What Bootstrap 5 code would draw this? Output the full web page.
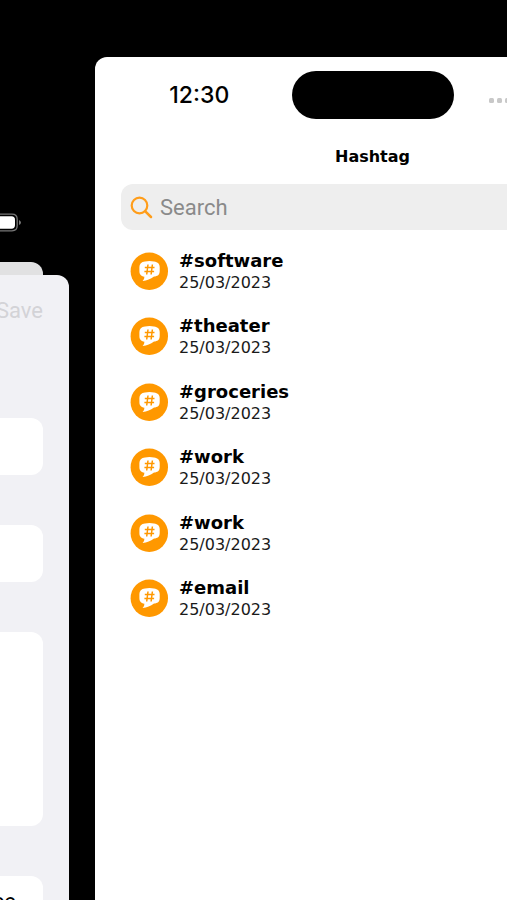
<!DOCTYPE html>
<html lang="en">
<head>
<meta charset="utf-8">
<meta name="viewport" content="width=device-width, initial-scale=1">
<title>Hashtag</title>
<link href="https://cdn.jsdelivr.net/npm/bootstrap@5.3.0/dist/css/bootstrap.min.css" rel="stylesheet">
<style>
body { background: #000; color: #000; font-family: "DejaVu Sans", Verdana, sans-serif; }
.stage { height: 100vh; gap: 26px; }
.phone-left { flex: 0 0 69px; min-width: 0; padding-top: 213px; }
.battery { display: block; flex: none; margin-bottom: 30px; }
.sheet-back { background: #e1e1e2; flex: none; height: 13px; margin-right: 26px; border-radius: 0 12px 0 0; }
.sheet { background: #f1f1f5; border-radius: 0 12px 0 0; padding-right: 26px; }
.save { color: #d3d3d7; font: 22px/28px Roboto, sans-serif; padding-top: 22px; }
.field { background: #fff; border-radius: 0 12px 12px 0; flex: none; }
.field-sm { height: 57px; }
.field-lg { height: 194px; }
.fields { gap: 50px; padding-top: 93px; }
.field-text { font: 22px/28px Roboto, sans-serif; padding: 12px 27px 0 0; height: 57px; }
.phone-right { flex: 1 0 555px; margin-top: 57px; background: #fff; border-radius: 12px 12px 0 0; padding: 14px 26px 0; }
.status { display: grid; grid-template-columns: 1fr 162px 1fr; align-items: center; }
.clock { font: 500 23px/28px Inter, sans-serif; padding-right: 14px; }
.island { height: 48px; background: #000; border-radius: 24px; }
.signal { padding-left: 35px; padding-top: 10px; }
.title { font-size: 16px; line-height: 24px; margin: 26px 0 15px; }
.search { background: #eee; border-radius: 12px; height: 46px; padding: 2px 9px 0; gap: 6px; }
.search input { font: 22px/28px Roboto, sans-serif; color: #000; outline: 0; }
.search input::placeholder { color: #8a8a8a; opacity: 1; }
.tags { display: grid; grid-template-rows: repeat(6, 1fr); height: 393px; margin-top: 8px; padding-left: 9px; }
.tag { gap: 11px; }
.tag-name { font-size: 18px; line-height: 24px; }
.tag-date { font-size: 16px; line-height: 20px; color: #1a1a1a; }
</style>
<script src="https://cdn.jsdelivr.net/npm/bootstrap@5.3.0/dist/js/bootstrap.bundle.min.js"></script>
</head>
<body>
<svg class="d-none" aria-hidden="true">
  <symbol id="chat-hash" viewBox="0 0 38 38">
    <circle cx="19.300" cy="19.200" r="18.700" fill="#ff9800"/>
    <path d="M15 9.400 Q19.500 8.700 24 9.400 C28 9.900 29.700 12 29.700 15 V19 C29.700 23 27.500 24.200 24 24.600 Q19 28.500 12.600 28.900 Q14.600 27 14.400 24.700 C10.700 24.200 9.400 22.200 9.400 19 V15 C9.400 11.700 11.300 9.800 15 9.400Z" fill="#fff"/>
    <path d="M18 12.500 L16.700 22.500 M22.400 12.500 L21.100 22.500 M14.800 15.400 H24.500 M14.400 19.600 H24.100" fill="none" stroke="#ff9800" stroke-width="1.500"/>
  </symbol>
</svg>
<div class="stage d-flex overflow-hidden">
  <section class="phone-left d-flex flex-column" aria-label="Editor">
    <svg class="battery" width="22" height="19" viewBox="0 0 22 19" aria-label="Battery">
      <path d="M-2 1.200 H12 Q17.200 1.200 17.200 6.500 V12.500 Q17.200 17.800 12 17.800 H-2" fill="none" stroke="#777" stroke-width="1.300"/>
      <path d="M0 3.300 H11.500 Q15 3.300 15 7 V12 Q15 15.700 11.500 15.700 H0Z" fill="#fff"/>
      <path d="M19 7 Q21 8 21 9.500 Q21 11 19 12Z" fill="#777"/>
    </svg>
    <div class="sheet-back"></div>
    <div class="sheet flex-grow-1 d-flex flex-column overflow-hidden">
      <div class="save d-flex justify-content-end"><span>Save</span></div>
      <div class="fields d-flex flex-column">
        <div class="field field-sm"></div>
        <div class="field field-sm"></div>
        <div class="field field-lg"></div>
        <div class="field field-text d-flex justify-content-end"><span>ee</span></div>
      </div>
    </div>
  </section>
  <main class="phone-right">
    <div class="status">
      <div class="clock text-center">12:30</div>
      <div class="island"></div>
      <div class="signal">
        <svg class="d-block" width="28" height="6" viewBox="0 0 28 6" fill="#c8c8c8" aria-hidden="true">
          <rect x="0" y="1" width="5" height="5" rx="1.500"/><rect x="8" y="1" width="5" height="5" rx="1.500"/><rect x="16" y="1" width="5" height="5" rx="1.500"/>
        </svg>
      </div>
    </div>
    <h1 class="title fw-bold text-center">Hashtag</h1>
    <label class="search d-flex align-items-center">
      <svg width="24" height="24" viewBox="0 0 24 24" fill="none" stroke="#ff9d1a" stroke-width="2.200" stroke-linecap="round" aria-hidden="true"><circle cx="9.500" cy="9.500" r="7.800"/><path d="M15.300 15.300 L21 21" stroke-width="2.500"/></svg>
      <input type="search" class="border-0 bg-transparent p-0 flex-grow-1" placeholder="Search" aria-label="Search">
    </label>
    <ul class="tags list-unstyled mb-0">
      <li class="tag d-flex align-items-center"><svg width="38" height="38" aria-hidden="true"><use href="#chat-hash"/></svg><div><div class="tag-name fw-bold">#software</div><div class="tag-date">25/03/2023</div></div></li>
      <li class="tag d-flex align-items-center"><svg width="38" height="38" aria-hidden="true"><use href="#chat-hash"/></svg><div><div class="tag-name fw-bold">#theater</div><div class="tag-date">25/03/2023</div></div></li>
      <li class="tag d-flex align-items-center"><svg width="38" height="38" aria-hidden="true"><use href="#chat-hash"/></svg><div><div class="tag-name fw-bold">#groceries</div><div class="tag-date">25/03/2023</div></div></li>
      <li class="tag d-flex align-items-center"><svg width="38" height="38" aria-hidden="true"><use href="#chat-hash"/></svg><div><div class="tag-name fw-bold">#work</div><div class="tag-date">25/03/2023</div></div></li>
      <li class="tag d-flex align-items-center"><svg width="38" height="38" aria-hidden="true"><use href="#chat-hash"/></svg><div><div class="tag-name fw-bold">#work</div><div class="tag-date">25/03/2023</div></div></li>
      <li class="tag d-flex align-items-center"><svg width="38" height="38" aria-hidden="true"><use href="#chat-hash"/></svg><div><div class="tag-name fw-bold">#email</div><div class="tag-date">25/03/2023</div></div></li>
    </ul>
  </main>
</div>
</body>
</html>
